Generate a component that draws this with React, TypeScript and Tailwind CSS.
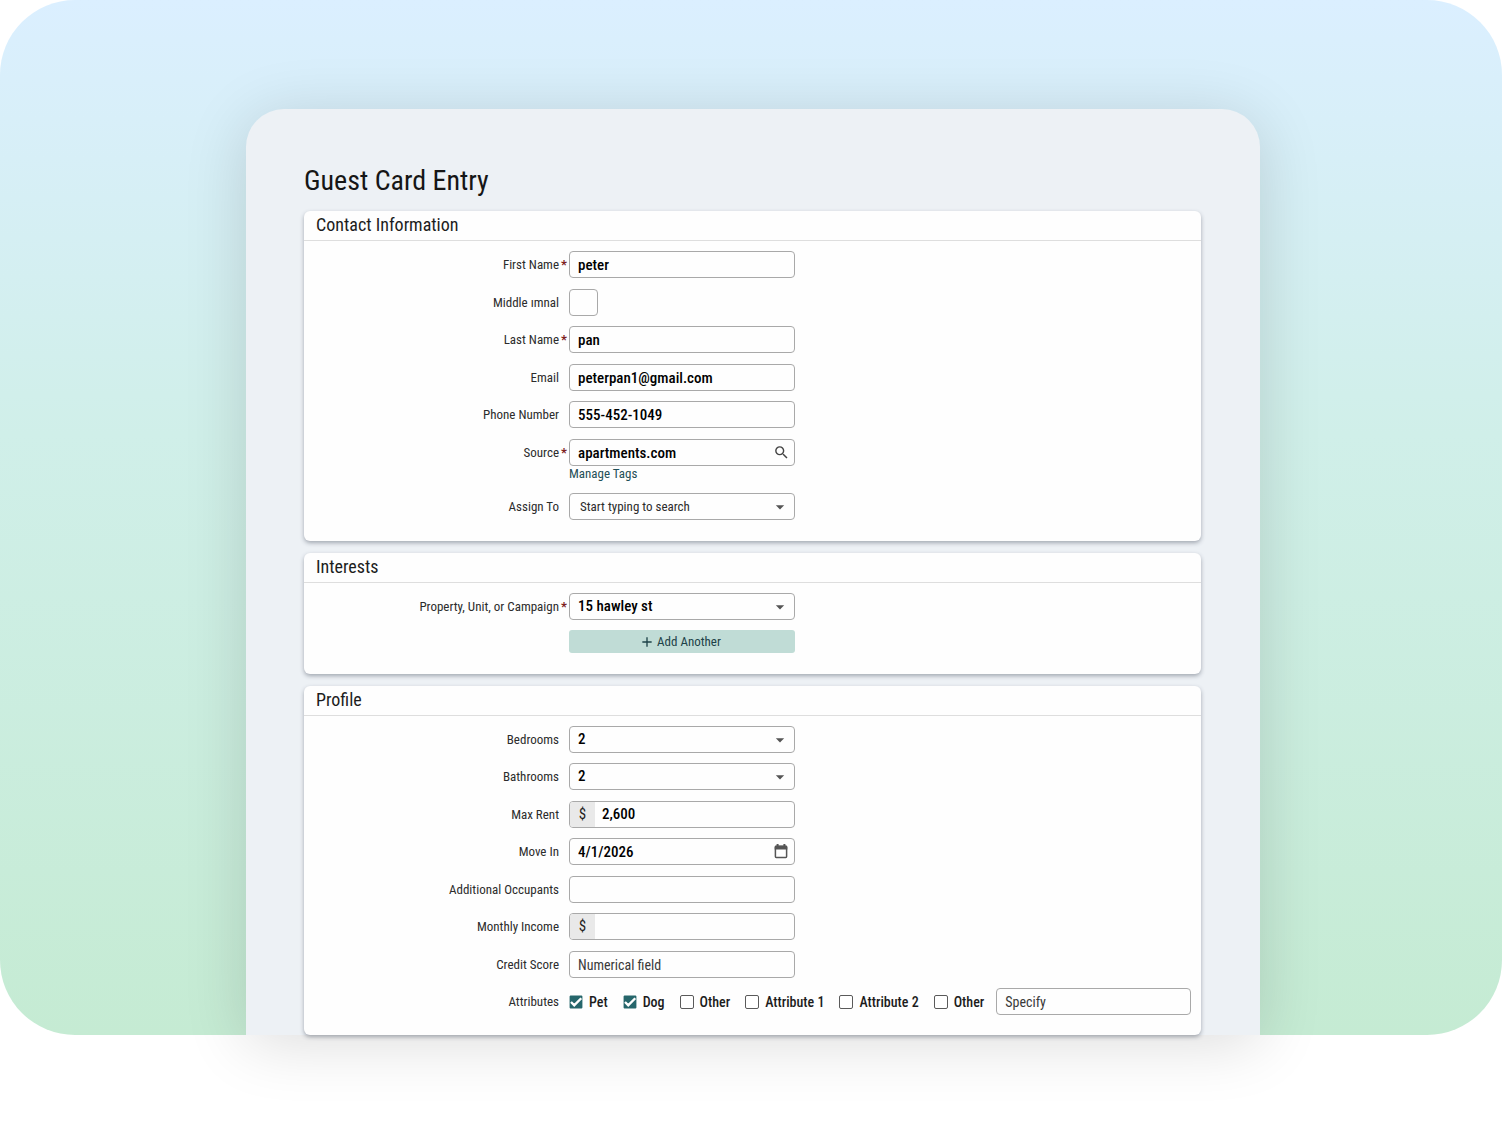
import React, { useState } from 'react';
import { MdAdd, MdArrowDropDown, MdCheck, MdSearch } from 'react-icons/md';

const fieldBox =
  'h-[27px] w-full rounded-[4px] border border-[#a9a9a9] bg-[#fefefe] px-2 text-[15px] font-medium text-black outline-none focus:border-[#1f6166] placeholder:text-sm placeholder:font-normal placeholder:text-[#3a3a3a] placeholder:opacity-100';

interface CardProps {
  title: string;
  rows?: string;
  children: React.ReactNode;
}

function Card({ title, rows = '', children }: CardProps) {
  return (
    <section className="rounded-md bg-[#fefefe] shadow-[0_2px_4px_rgba(70,80,95,0.45)]">
      <h2 className="flex h-[30px] items-center border-b border-[#dedede] px-3 pb-px text-lg text-[#1c1c1c]">{title}</h2>
      <div className={`flex flex-col gap-[10px] pt-[10px] pb-5 ${rows}`}>{children}</div>
    </section>
  );
}

interface RowProps {
  label: string;
  htmlFor?: string;
  required?: boolean;
  wide?: boolean;
  children: React.ReactNode;
}

function Row({ label, htmlFor, required, wide, children }: RowProps) {
  return (
    <div className="flex items-start">
      <label htmlFor={htmlFor} className="flex h-[27px] w-[265px] shrink-0 items-center justify-end text-[13px] text-[#2c2c2c]">
        {label}
        <span className="w-[10px] text-center font-bold text-[#7d1f1f]">{required ? '*' : ''}</span>
      </label>
      <div className={wide ? 'min-w-0 flex-1 pr-[10px]' : 'w-[226px]'}>{children}</div>
    </div>
  );
}

interface TextFieldProps {
  id: string;
  value?: string;
  placeholder?: string;
}

function TextField({ id, value = '', placeholder }: TextFieldProps) {
  return <input id={id} type="text" defaultValue={value} placeholder={placeholder} className={fieldBox} />;
}

function SelectField({ id, options, muted }: { id: string; options: string[]; muted?: boolean }) {
  return (
    <div className="relative">
      <select
        id={id}
        className={`${fieldBox} appearance-none ${muted ? 'pl-[10px]! text-[13px]! font-normal! text-[#2c2c2c]!' : ''}`}
      >
        {options.map((o) => (
          <option key={o}>{o}</option>
        ))}
      </select>
      <MdArrowDropDown className="pointer-events-none absolute top-1 right-[5px] h-5 w-5 text-[#555]" />
    </div>
  );
}

function MoneyField({ id, value = '' }: { id: string; value?: string }) {
  return (
    <div className="flex h-[27px] overflow-hidden rounded-[4px] border border-[#a9a9a9] bg-[#fefefe]">
      <span className="flex w-[25px] items-center justify-center bg-[#e9e9e9] text-[15px] text-[#222]">$</span>
      <input
        id={id}
        type="text"
        defaultValue={value}
        className="min-w-0 flex-1 px-[7px] text-[15px] font-medium text-black outline-none"
      />
    </div>
  );
}

function CalendarIcon() {
  return (
    <svg viewBox="0 0 14 15" className="pointer-events-none absolute top-[6px] right-[7px] h-[15px] w-[14px] text-[#555]">
      <path d="M2.600 0h2v3h-2zM9.400 0h2v3h-2z" fill="currentColor" />
      <path d="M2 1.500h10a1.300 1.300 0 0 1 1.300 1.300v2.700H.7V2.800A1.300 1.300 0 0 1 2 1.500z" fill="currentColor" />
      <rect x="1.400" y="2.400" width="11.200" height="11" rx="0.800" fill="none" stroke="currentColor" strokeWidth="1.500" />
    </svg>
  );
}

function CheckField({ label, initial = false }: { label: string; initial?: boolean }) {
  const [checked, setChecked] = useState(initial);

  return (
    <label className="flex items-center gap-[6px] text-sm font-medium text-[#1c1c1c]">
      <span className="relative flex h-[14px] w-[14px]">
        <input
          type="checkbox"
          checked={checked}
          onChange={(e) => setChecked(e.target.checked)}
          className="h-[14px] w-[14px] appearance-none rounded-[2px] border border-[#5a5a5a] bg-white checked:border-[#26666b] checked:bg-[#26666b]"
        />
        {checked && (
          <MdCheck className="pointer-events-none absolute inset-0 h-[14px] w-[14px] stroke-white stroke-2 text-white" />
        )}
      </span>
      {label}
    </label>
  );
}

export default function App() {
  return (
    <div className="min-h-screen overflow-hidden bg-white pb-[90px] font-['Roboto_Condensed',Roboto,sans-serif]">
      <main className="rounded-[75px] bg-linear-to-b from-[#dbefff] via-[#d0efe9] via-42% to-[#c5ebd3] pt-[109px] pr-[242px] pl-[246px]">
        <div className="rounded-t-[38px] bg-[#edf1f5] pt-[51px] pr-[59px] pl-[58px] shadow-[0_8px_64px_rgba(0,0,0,0.14)]">
          <h1 className="mb-[9px] text-[28px] leading-[42px] text-[#161616]">Guest Card Entry</h1>

          <form className="flex flex-col gap-3">
            <Card title="Contact Information" rows="*:odd:pb-px">
              <Row label="First Name" htmlFor="first-name" required>
                <TextField id="first-name" value="peter" />
              </Row>
              <Row label="Middle ımnal" htmlFor="middle-initial">
                <input id="middle-initial" type="text" maxLength={1} className={`${fieldBox} w-[29px]!`} />
              </Row>
              <Row label="Last Name" htmlFor="last-name" required>
                <TextField id="last-name" value="pan" />
              </Row>
              <Row label="Email" htmlFor="email">
                <TextField id="email" value="peterpan1@gmail.com" />
              </Row>
              <Row label="Phone Number" htmlFor="phone">
                <TextField id="phone" value="555-452-1049" />
              </Row>
              <Row label="Source" htmlFor="source" required>
                <div className="relative">
                  <TextField id="source" value="apartments.com" />
                  <MdSearch className="pointer-events-none absolute top-[5px] right-[5px] h-[17px] w-[17px] text-[#444]" />
                </div>
                <a href="#tags" className="block pb-px text-[13px] leading-4 text-[#1f4f57]">
                  Manage Tags
                </a>
              </Row>
              <Row label="Assign To" htmlFor="assign-to">
                <SelectField id="assign-to" options={['Start typing to search']} muted />
              </Row>
            </Card>

            <Card title="Interests" rows="*:even:pb-px">
              <Row label="Property, Unit, or Campaign" htmlFor="property" required>
                <SelectField id="property" options={['15 hawley st']} />
              </Row>
              <div className="pl-[265px]">
                <button
                  type="button"
                  className="flex h-[23px] w-[226px] items-center justify-center gap-[2px] rounded-[3px] bg-[#c0dcd6] pr-1 text-[13px] text-[#1d4248]"
                >
                  <MdAdd className="h-4 w-4" />
                  Add Another
                </button>
              </div>
            </Card>

            <Card title="Profile" rows="*:even:not-last:pb-px">
              <Row label="Bedrooms" htmlFor="bedrooms">
                <SelectField id="bedrooms" options={['2']} />
              </Row>
              <Row label="Bathrooms" htmlFor="bathrooms">
                <SelectField id="bathrooms" options={['2']} />
              </Row>
              <Row label="Max Rent" htmlFor="max-rent">
                <MoneyField id="max-rent" value="2,600" />
              </Row>
              <Row label="Move In" htmlFor="move-in">
                <div className="relative">
                  <TextField id="move-in" value="4/1/2026" />
                  <CalendarIcon />
                </div>
              </Row>
              <Row label="Additional Occupants" htmlFor="occupants">
                <TextField id="occupants" />
              </Row>
              <Row label="Monthly Income" htmlFor="income">
                <MoneyField id="income" />
              </Row>
              <Row label="Credit Score" htmlFor="credit-score">
                <TextField id="credit-score" placeholder="Numerical field" />
              </Row>
              <Row label="Attributes" wide>
                <div className="flex items-center gap-3">
                  <div className="flex items-center gap-[15px]">
                    <CheckField label="Pet" initial />
                    <CheckField label="Dog" initial />
                    <CheckField label="Other" />
                    <CheckField label="Attribute 1" />
                    <CheckField label="Attribute 2" />
                    <CheckField label="Other" />
                  </div>
                  <div className="min-w-0 flex-1">
                    <input aria-label="Specify" type="text" placeholder="Specify" className={fieldBox} />
                  </div>
                </div>
              </Row>
            </Card>
          </form>
        </div>
      </main>
    </div>
  );
}
